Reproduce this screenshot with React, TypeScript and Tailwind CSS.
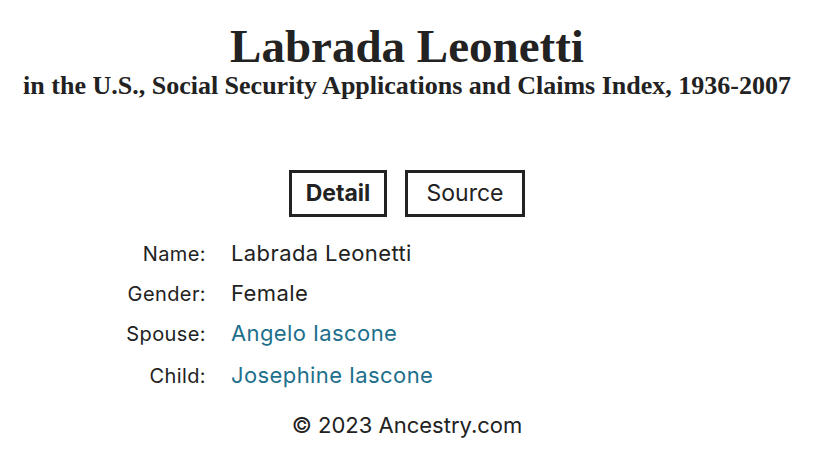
import React from "react";

const rows: { label: string; value: string; link?: boolean }[] = [
    { label: "Name:", value: "Labrada Leonetti" },
    { label: "Gender:", value: "Female" },
    { label: "Spouse:", value: "Angelo Iascone", link: true },
    { label: "Child:", value: "Josephine Iascone", link: true },
];

export default function App() {
    return (
        <div className="w-[835px] h-[453px] bg-white text-[#222] font-['Inter','Liberation_Sans',sans-serif] overflow-hidden">
            <div className="w-[814px]">
                <div className="pt-[20px] text-center font-['Liberation_Serif',serif] font-bold">
                    <h1 className="text-[47px] leading-[52px]">Labrada Leonetti</h1>
                    <p className="text-[26px] leading-[28px] whitespace-nowrap">in the U.S., Social Security Applications and Claims Index, 1936-2007</p>
                </div>

                <div className="mt-[70px] flex justify-center gap-[18px]">
                    <button className="h-[47px] w-[98px] border-[3px] border-[#222] text-[23px] font-bold">Detail</button>
                    <button className="h-[47px] w-[120px] border-[3px] border-[#222] text-[23px]">Source</button>
                </div>

                <div className="mt-[20px] flex flex-col gap-[18px] tracking-[0.4px]">
                    {rows.map((r, i) => (
                        <div key={r.label} className={`flex items-baseline h-[22px] ${i === 3 ? "mt-[2px]" : ""}`}>
                            <div className="w-[206px] text-right text-[20px]">{r.label}</div>
                            <div className={`ml-[25px] text-[22px] ${r.link ? "text-[#1d6f8c]" : ""}`}>{r.value}</div>
                        </div>
                    ))}
                </div>

                <p className="mt-[28px] text-center text-[22px]">© 2023 Ancestry.com</p>
            </div>
        </div>
    );
}
